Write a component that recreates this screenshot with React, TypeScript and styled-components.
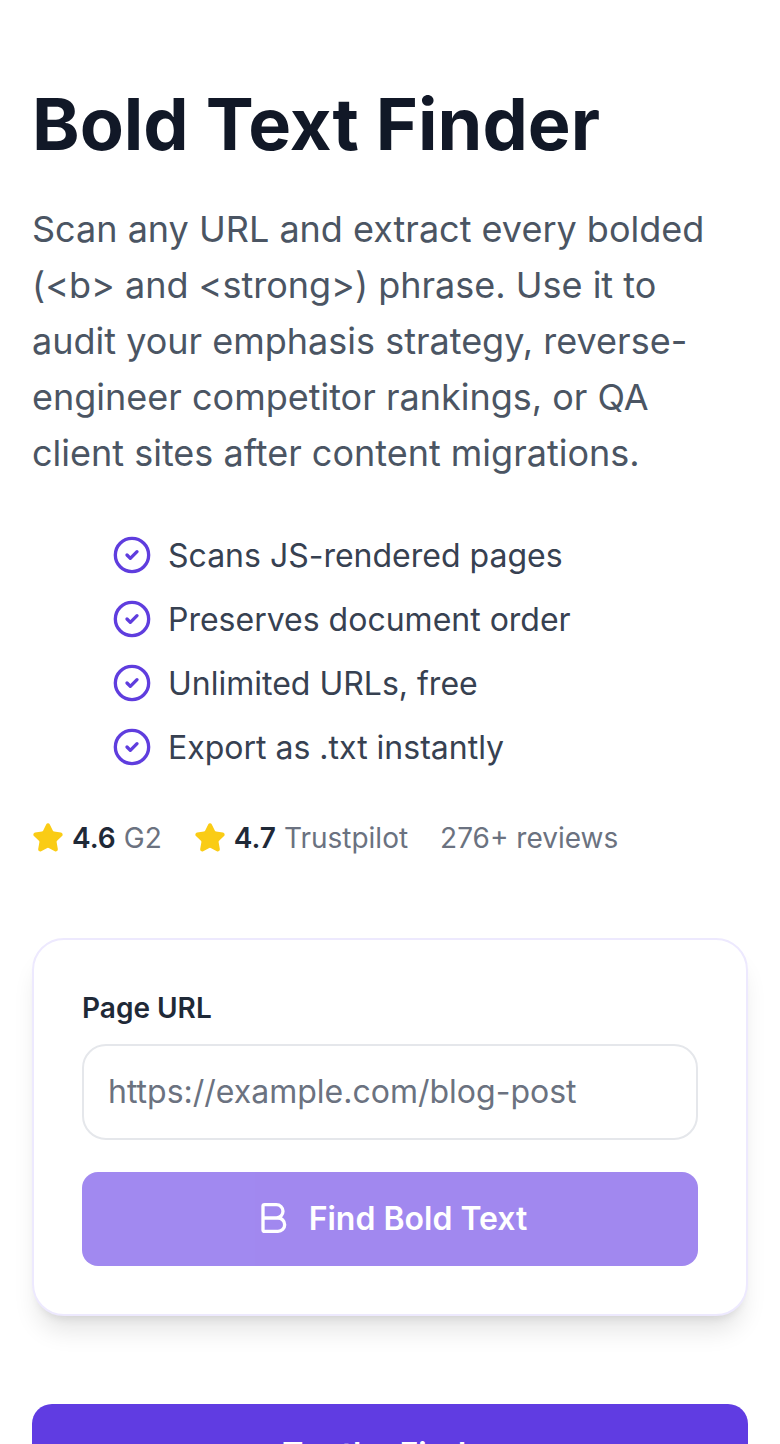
import React from 'react';
import styled, { createGlobalStyle } from 'styled-components';
import { Bold, CircleCheck, Star } from 'lucide-react';

const GlobalStyle = createGlobalStyle`
  * {
    box-sizing: border-box;
  }
  html, body {
    margin: 0;
    background: #fff;
    font-family: Inter, "Liberation Sans", sans-serif;
  }
`;

const Page = styled.main`
  width: 780px;
  height: 1444px;
  overflow: hidden;
  padding: 79px 32px 0;
`;

const Title = styled.h1`
  margin: 0 0 32px;
  font-size: 72px;
  line-height: 90px;
  font-weight: 700;
  color: #111827;
`;

const Intro = styled.p`
  margin: 0 0 50px;
  font-size: 36px;
  line-height: 56px;
  color: #4b5563;
`;

const Features = styled.ul`
  list-style: none;
  margin: 0 0 47px;
  padding: 0 0 0 80px;
  display: flex;
  flex-direction: column;
  gap: 16px;
`;

const Feature = styled.li`
  display: flex;
  align-items: center;
  gap: 16px;
  height: 48px;
  font-size: 32px;
  color: #374151;

  svg {
    color: #5f3dde;
    flex-shrink: 0;
  }
`;

const Ratings = styled.div`
  display: flex;
  align-items: center;
  height: 40px;
  margin-bottom: 80px;
  font-size: 28px;
  color: #6b7280;
`;

const Rating = styled.span`
  display: flex;
  align-items: center;
  gap: 8px;
  margin-right: 32px;

  svg {
    color: #facc15;
    fill: #facc15;
  }
`;

const Score = styled.strong`
  font-weight: 600;
  color: #1f2937;
`;

const Card = styled.section`
  border: 2px solid #ede9fe;
  border-radius: 32px;
  padding: 48px;
  background: #fff;
  box-shadow: 0 20px 25px -5px rgba(0, 0, 0, 0.1), 0 8px 10px -6px rgba(0, 0, 0, 0.1);
`;

const Label = styled.label`
  display: block;
  margin-bottom: 16px;
  font-size: 28px;
  line-height: 40px;
  font-weight: 600;
  color: #1f2937;
`;

const UrlInput = styled.input`
  display: block;
  width: 100%;
  height: 96px;
  padding: 0 24px 2px;
  border: 2px solid #e5e7eb;
  border-radius: 24px;
  outline: none;
  font: inherit;
  font-size: 32px;
  color: #111827;
  margin-bottom: 32px;

  &::placeholder {
    color: #6b7280;
    opacity: 1;
  }
`;

const SubmitButton = styled.button`
  display: flex;
  align-items: center;
  justify-content: center;
  gap: 16px;
  width: 100%;
  height: 94px;
  padding: 0 0 2px;
  border: 0;
  border-radius: 16px;
  background: #633ae6;
  opacity: 0.6;
  color: #fff;
  font: inherit;
  font-size: 32px;
  font-weight: 600;
`;

const CtaButton = styled.a`
  display: block;
  margin-top: 88px;
  padding: 27px 0;
  border-radius: 20px;
  background: #603ce2;
  color: #fff;
  font-size: 32px;
  line-height: 48px;
  font-weight: 600;
  text-align: center;
`;

const features = [
  'Scans JS-rendered pages',
  'Preserves document order',
  'Unlimited URLs, free',
  'Export as .txt instantly',
];

export default function App() {
  return (
    <>
      <GlobalStyle />
      <Page>
        <Title>Bold Text Finder</Title>
        <Intro>
          Scan any URL and extract every bolded (&lt;b&gt; and &lt;strong&gt;) phrase. Use it to
          audit your emphasis strategy, reverse-engineer competitor rankings, or QA client sites
          after content migrations.
        </Intro>
        <Features>
          {features.map((item) => (
            <Feature key={item}>
              <CircleCheck size={40} />
              {item}
            </Feature>
          ))}
        </Features>
        <Ratings>
          <Rating>
            <Star size={32} />
            <Score>4.6</Score> G2
          </Rating>
          <Rating>
            <Star size={32} />
            <Score>4.7</Score> Trustpilot
          </Rating>
          <span>276+ reviews</span>
        </Ratings>
        <Card>
          <Label htmlFor="url">Page URL</Label>
          <UrlInput id="url" placeholder="https://example.com/blog-post" />
          <SubmitButton disabled>
            <Bold size={40} />
            Find Bold Text
          </SubmitButton>
        </Card>
        <CtaButton>Try the Finder</CtaButton>
      </Page>
    </>
  );
}
